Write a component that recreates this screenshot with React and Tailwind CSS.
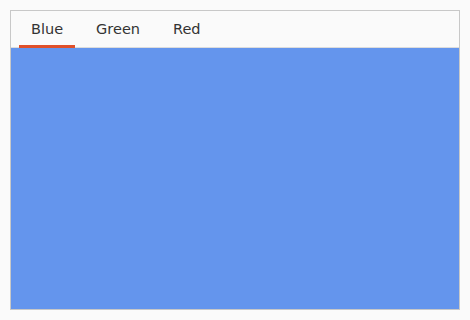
import React, { useState } from "react";

const tabs = [
  { name: "Blue", color: "bg-[#6495ed]" },
  { name: "Green", color: "bg-[#3cb371]" },
  { name: "Red", color: "bg-[#f08080]" },
];

export default function App() {
  const [active, setActive] = useState(0);

  return (
    <div className="w-[470px] h-[320px] bg-[#fafafa] p-[10px] font-['DejaVu_Sans',sans-serif]">
      <div className="w-[450px] h-[300px] border border-[#c8c8c8] flex flex-col">
        <div className="h-[37px] border-b border-[#dcdcdc] flex pl-2 gap-[9px]">
          {tabs.map((t, i) => (
            <button
              key={t.name}
              onClick={() => setActive(i)}
              className="relative h-full px-3 text-[14.5px] text-[#333] leading-none"
            >
              {t.name}
              {active === i && (
                <span className="absolute left-0 right-0 bottom-[-1px] h-[3px] bg-[#e0502a]" />
              )}
            </button>
          ))}
        </div>
        <div className={`flex-1 ${tabs[active].color}`} />
      </div>
    </div>
  );
}
